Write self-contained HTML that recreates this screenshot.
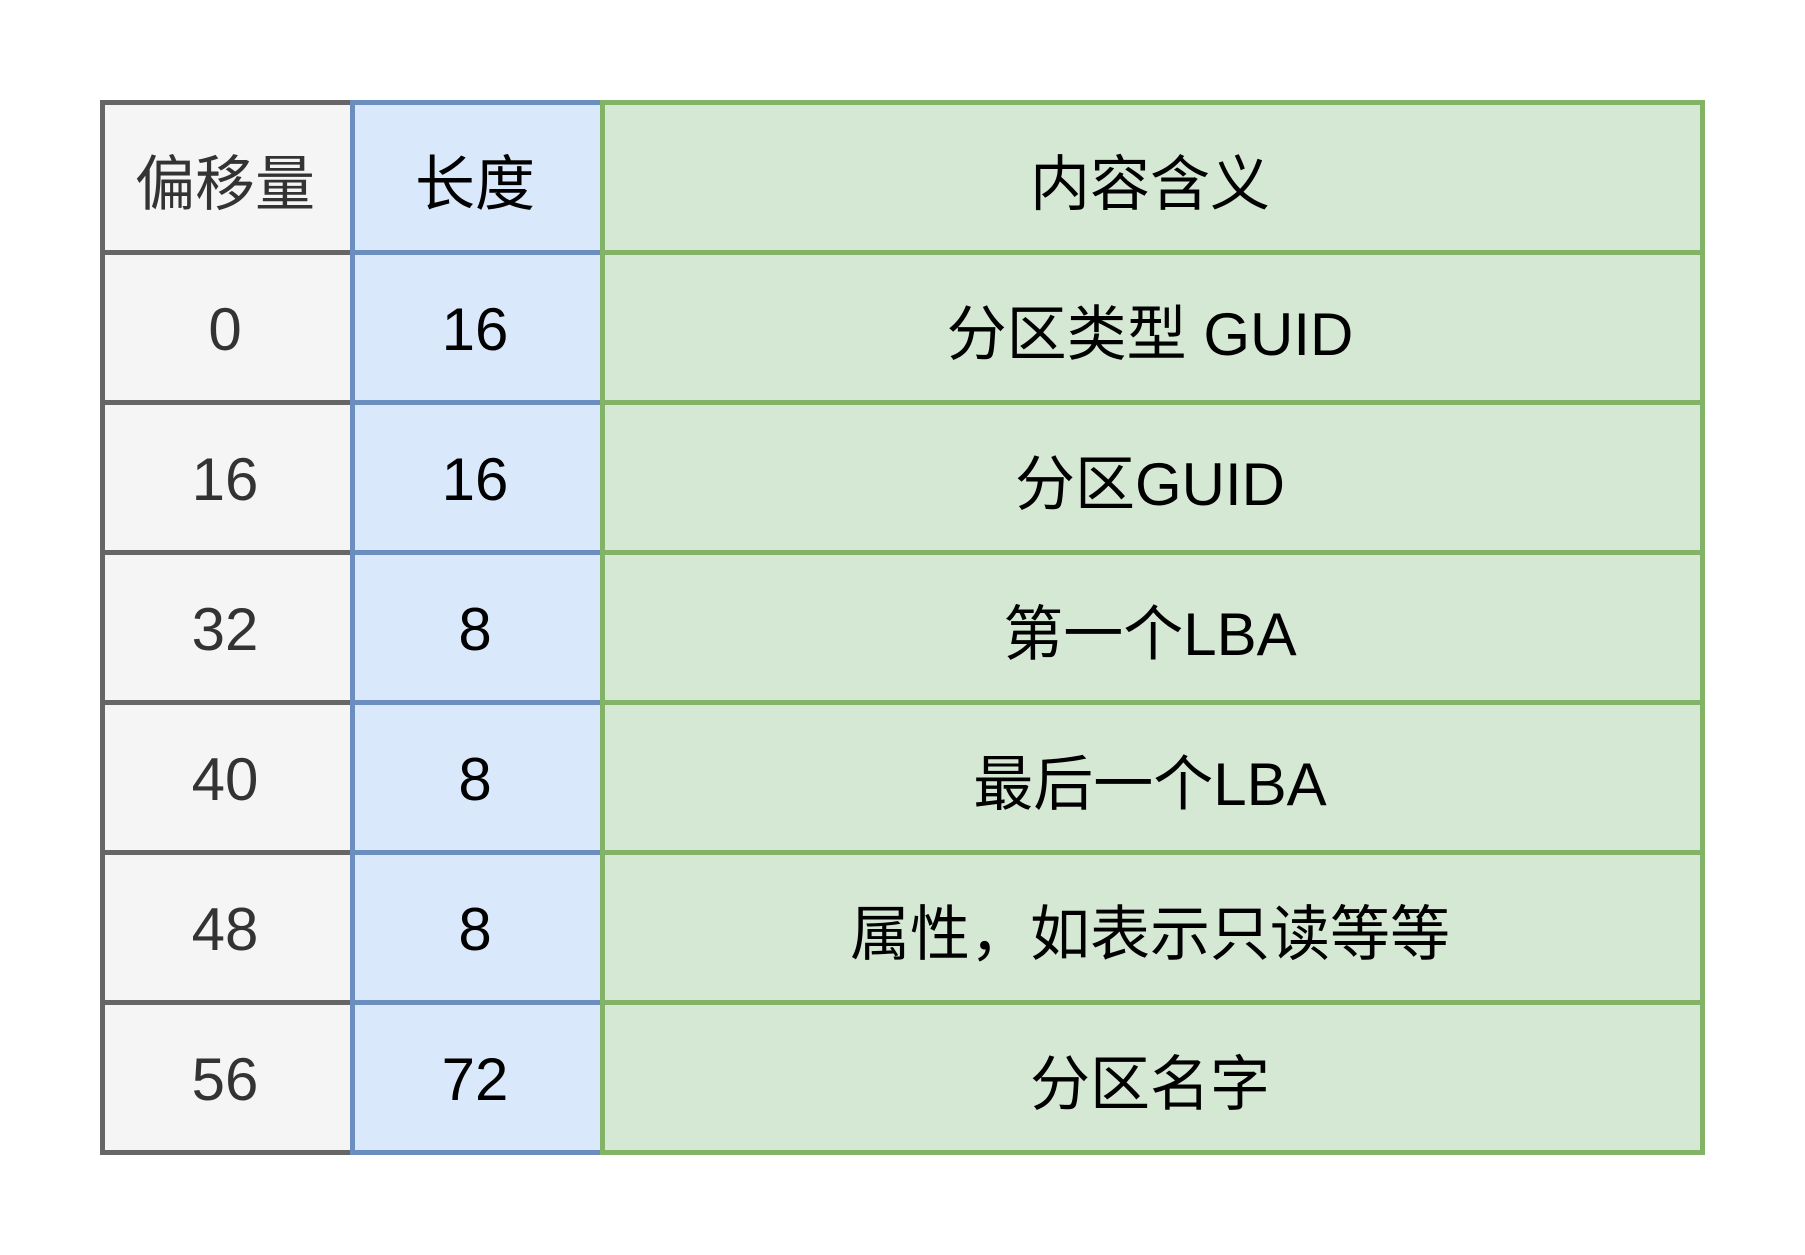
<!DOCTYPE html>
<html><head><meta charset="utf-8"><style>
body{margin:0;width:1805px;height:1255px;background:#fff;position:relative;overflow:hidden;font-family:"Liberation Sans","Noto Sans CJK SC",sans-serif;}
.c{position:absolute;box-sizing:border-box;border:5px solid;display:flex;align-items:center;justify-content:center;font-size:60px;height:155px;padding-right:5px;padding-top:3px;}
.g{border-color:#666;background:#f5f5f5;color:#333;left:100px;width:255px;}
.b{border-color:#6c8ebf;background:#dae8fc;color:#000;left:350px;width:255px;}
.n{border-color:#82b366;background:#d5e8d4;color:#000;left:600px;width:1105px;}
</style></head><body>
<div class="c g" style="top:100px">偏移量</div>
<div class="c g" style="top:250px">0</div>
<div class="c g" style="top:400px">16</div>
<div class="c g" style="top:550px">32</div>
<div class="c g" style="top:700px">40</div>
<div class="c g" style="top:850px">48</div>
<div class="c g" style="top:1000px">56</div>
<div class="c b" style="top:100px">长度</div>
<div class="c b" style="top:250px">16</div>
<div class="c b" style="top:400px">16</div>
<div class="c b" style="top:550px">8</div>
<div class="c b" style="top:700px">8</div>
<div class="c b" style="top:850px">8</div>
<div class="c b" style="top:1000px">72</div>
<div class="c n" style="top:100px">内容含义</div>
<div class="c n" style="top:250px">分区类型 GUID</div>
<div class="c n" style="top:400px">分区GUID</div>
<div class="c n" style="top:550px">第一个LBA</div>
<div class="c n" style="top:700px">最后一个LBA</div>
<div class="c n" style="top:850px">属性，如表示只读等等</div>
<div class="c n" style="top:1000px">分区名字</div>
</body></html>
